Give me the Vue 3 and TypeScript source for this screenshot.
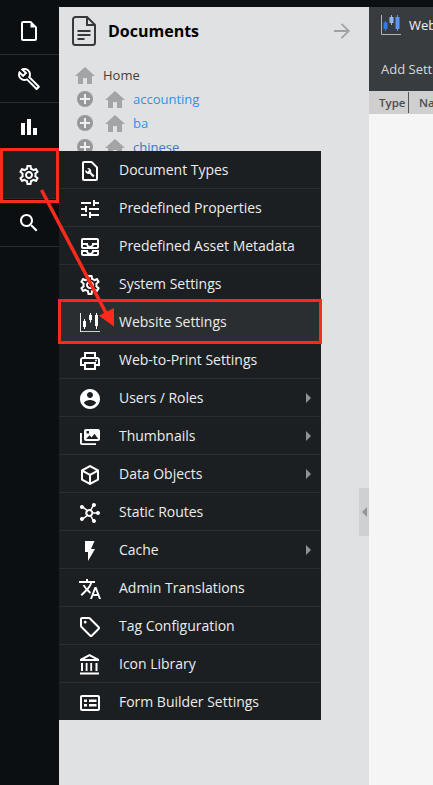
<script setup lang="ts">
interface MenuItem {
  label: string
  icon: string
  submenu?: boolean
  active?: boolean
  solid?: boolean
}

const gear =
  'M19.43 12.98c.04-.32.07-.64.07-.98 0-.34-.03-.66-.07-.98l2.11-1.65c.19-.15.24-.42.12-.64l-2-3.46c-.09-.16-.26-.25-.44-.25-.06 0-.12.01-.17.03l-2.49 1c-.52-.4-1.08-.73-1.69-.98l-.38-2.65C14.46 2.18 14.25 2 14 2h-4c-.25 0-.46.18-.49.42l-.38 2.65c-.61.25-1.17.59-1.69.98l-2.49-1c-.06-.02-.12-.03-.18-.03-.17 0-.34.09-.43.25l-2 3.46c-.13.22-.07.49.12.64l2.11 1.65c-.04.32-.07.65-.07.98 0 .33.03.66.07.98l-2.11 1.65c-.19.15-.24.42-.12.64l2 3.46c.09.16.26.25.44.25.06 0 .12-.01.17-.03l2.49-1c.52.4 1.08.73 1.69.98l.38 2.65c.03.24.24.42.49.42h4c.25 0 .46-.18.49-.42l.38-2.65c.61-.25 1.17-.59 1.69-.98l2.49 1c.06.02.12.03.18.03.17 0 .34-.09.43-.25l2-3.46c.12-.22.07-.49-.12-.64l-2.11-1.65zm-1.98-1.71c.04.31.05.52.05.73 0 .21-.02.43-.05.73l-.14 1.13.89.7 1.08.84-.7 1.21-1.27-.51-1.04-.42-.9.68c-.43.32-.84.56-1.25.73l-1.06.43-.16 1.13-.2 1.35h-1.4l-.19-1.35-.16-1.13-1.06-.43c-.43-.18-.83-.41-1.23-.71l-.91-.7-1.06.43-1.27.51-.7-1.21 1.08-.84.89-.7-.14-1.13c-.03-.31-.05-.54-.05-.74s.02-.43.05-.73l.14-1.13-.89-.7-1.08-.84.7-1.21 1.27.51 1.04.42.9-.68c.43-.32.84-.56 1.25-.73l1.06-.43.16-1.13.2-1.35h1.39l.19 1.35.16 1.13 1.06.43c.43.18.83.41 1.23.71l.91.7 1.06-.43 1.27-.51.7 1.21-1.07.85-.89.7.14 1.13zM12 8c-2.21 0-4 1.79-4 4s1.79 4 4 4 4-1.79 4-4-1.79-4-4-4zm0 6c-1.1 0-2-.9-2-2s.9-2 2-2 2 .9 2 2-.9 2-2 2z'

const nav: { name: string; icon: string; active?: boolean }[] = [
  { name: 'file', icon: 'M14 2H6c-1.1 0-2 .9-2 2v16c0 1.1.9 2 2 2h12c1.1 0 2-.9 2-2V8zM6 20V4h7.500v4.500H18V20z' },
  {
    name: 'tools',
    icon: 'M22.61 18.99l-9.08-9.08c.93-2.34.45-5.1-1.44-7C9.79.61 6.21.4 3.66 2.26L7.5 6.11 6.08 7.52 2.25 3.69C.39 6.23.6 9.82 2.9 12.11c1.86 1.86 4.57 2.35 6.89 1.48l9.11 9.11c.39.39 1.02.39 1.41 0l2.3-2.3c.4-.38.4-1.01 0-1.41zm-3 1.6l-9.46-9.46c-.61.45-1.29.72-2 .82-1.36.2-2.79-.21-3.83-1.25C3.37 9.76 2.93 8.5 3 7.26l3.09 3.09 4.24-4.24-3.09-3.09c1.24-.07 2.49.37 3.44 1.31 1.08 1.08 1.49 2.57 1.24 3.96-.12.71-.42 1.37-.88 1.96l9.45 9.45-.88.89z',
  },
  { name: 'reports', icon: 'M4 8h4v12H4zM10 4h4v16h-4zM16 13h4v7h-4z' },
  { name: 'settings', icon: gear, active: true },
  {
    name: 'search',
    icon: 'M15.5 14h-.79l-.28-.27C15.41 12.59 16 11.11 16 9.5 16 5.91 13.09 3 9.5 3S3 5.91 3 9.5 5.91 16 9.5 16c1.61 0 3.09-.59 4.23-1.57l.27.28v.79l5 4.99L20.49 19l-4.99-5zm-6 0C7.01 14 5 11.99 5 9.5S7.01 5 9.5 5 14 7.01 14 9.5 11.99 14 9.5 14z',
  },
]

const menu: MenuItem[] = [
  {
    label: 'Document Types',
    icon: 'M14 2H6c-1.1 0-2 .9-2 2v16c0 1.1.9 2 2 2h12c1.1 0 2-.9 2-2V8zM6 20V4h7.200L18 8.800V20zM16.600 16.700l-3.500-3.500c.4-1.200.1-2.400-.8-3.300-.9-.8-2-1-3-.7l1.900 1.900-1.700 1.700-2-1.900c-.4 1.100-.1 2.300.7 3.100.9.9 2.200 1.200 3.300.8l3.500 3.400z',
  },
  {
    label: 'Predefined Properties',
    icon: 'M3 17v2h6v-2H3zM3 5v2h10V5H3zm10 16v-2h8v-2h-8v-2h-2v6h2zM7 9v2H3v2h4v2h2V9H7zm14 4v-2H11v2h10zm-6-4h2V7h4V5h-4V3h-2v6z',
  },
  {
    label: 'Predefined Asset Metadata',
    icon: 'M19 3H5c-1.1 0-2 .9-2 2v7c0 1.1.9 2 2 2h14c1.1 0 2-.9 2-2V5c0-1.1-.9-2-2-2zM5 10h3.13c.21.78.67 1.47 1.27 2H5v-2zm14 2h-4.4c.6-.53 1.06-1.22 1.27-2H19v2zm0-4h-5v1c0 1.07-.93 2-2 2s-2-.93-2-2V8H5V5h14v3zm-5 7v1c0 .47-.19.9-.48 1.25-.37.45-.92.75-1.52.75s-1.15-.3-1.52-.75c-.29-.35-.48-.78-.48-1.25v-1H3v4c0 1.1.9 2 2 2h14c1.1 0 2-.9 2-2v-4h-7zm-9 2h3.13c.02.09.06.17.09.25.24.68.65 1.28 1.18 1.75H5v-2zm14 2h-4.4c.54-.47.95-1.07 1.18-1.75.03-.08.07-.17.09-.25H19v2z',
  },
  { label: 'System Settings', icon: gear },
  {
    label: 'Website Settings',
    icon: 'M2 2h.9v18.200H22v.9H2zM6 8h1v2h1v6H7v2H6v-2H5v-6h1zM12 2h1v2h1v5h-1v2.500h-1V9h-1V4h1zM18 2h1v2h1v11h-1v3h-1v-3h-1V4h1z',
    active: true,
  },
  {
    label: 'Web-to-Print Settings',
    icon: 'M19 8h-1V3H6v5H5c-1.66 0-3 1.34-3 3v6h4v4h12v-4h4v-6c0-1.66-1.34-3-3-3zM8 5h8v3H8V5zm8 12v2H8v-4h8v2zm2-2v-2H6v2H4v-4c0-.55.45-1 1-1h14c.55 0 1 .45 1 1v4h-2zM17 11.500a1 1 0 1 0 2 0a1 1 0 1 0-2 0z',
  },
  {
    label: 'Users / Roles',
    icon: 'M12 2C6.48 2 2 6.48 2 12s4.48 10 10 10 10-4.48 10-10S17.52 2 12 2zm0 3c1.66 0 3 1.34 3 3s-1.34 3-3 3-3-1.34-3-3 1.34-3 3-3zm0 14.2c-2.5 0-4.71-1.28-6-3.22.03-1.99 4-3.08 6-3.08 1.99 0 5.97 1.09 6 3.08-1.29 1.94-3.5 3.22-6 3.22z',
    submenu: true,
  },
  {
    label: 'Thumbnails',
    icon: 'M8 4h12c1.100 0 2 .9 2 2v8c0 1.100-.9 2-2 2H8c-1.100 0-2-.9-2-2V6c0-1.100.9-2 2-2zM8 14h12.200L16.500 8.700l-3 3.800-2-2.200zM8.500 6v2.500H11V6zM2 8h1.900v10.200H18V20H4c-1.100 0-2-.9-2-2z',
    submenu: true,
  },
  {
    label: 'Data Objects',
    icon: 'M21 16.500c0 .38-.21.71-.53.88l-7.900 4.440c-.16.12-.36.18-.57.18s-.41-.06-.57-.18l-7.900-4.440A1 1 0 0 1 3 16.500v-9c0-.38.21-.71.53-.88l7.900-4.440c.16-.12.36-.18.57-.18s.41.06.57.18l7.900 4.440c.32.17.53.5.53.88zM12 4.150L6.040 7.500 12 10.850l5.960-3.350zM5 15.910l6 3.380v-6.710L5 9.210zM19 15.910v-6.700l-6 3.370v6.710z',
    submenu: true,
  },
  {
    label: 'Static Routes',
    icon: 'M11.300 8a4 4 0 1 1-.1 0zM11.300 10a2 2 0 1 0 .1 0zM16 2a2 2 0 1 1-.1 0zM4 4a2 2 0 1 1-.1 0zM4 16a2 2 0 1 1-.1 0zM16 18a2 2 0 1 1-.1 0zM20 10a2 2 0 1 1-.1 0zM4.500 6.700l.9-1.200 4 3.300-.9 1.200zM4.500 17.300l4-3.300.9 1.200-4 3.300zM12.200 8.500l2.500-4.500 1.300.7-2.500 4.500zM12.200 15.500l1.300-.7 2.500 4.500-1.300.7zM14.500 11.300h5v1.400h-5z',
    solid: true,
  },
  { label: 'Cache', icon: 'M7 2h9.500l-3.500 8h4l-7 12v-9H7z', submenu: true },
  {
    label: 'Admin Translations',
    icon: 'M12.87 15.07l-2.54-2.51.03-.03c1.74-1.94 2.98-4.17 3.71-6.53H17V4h-7V2H8v2H1v1.99h11.17C11.5 7.92 10.44 9.75 9 11.35 8.07 10.32 7.3 9.19 6.69 8h-2c.73 1.63 1.73 3.17 2.98 4.56l-5.09 5.02L4 19l5-5 3.11 3.11.76-2.04zM18.5 10h-2L12 22h2l1.12-3h4.75L21 22h2l-4.5-12zm-2.62 7l1.62-4.33L19.12 17h-3.24z',
  },
  {
    label: 'Tag Configuration',
    icon: 'M21.41 11.58l-9-9C12.050 2.220 11.550 2 11 2H4c-1.100 0-2 .9-2 2v7c0 .55.22 1.050.59 1.420l9 9c.36.36.86.58 1.410.58s1.050-.22 1.410-.59l7-7c.37-.36.59-.86.59-1.410s-.23-1.060-.59-1.420zM13 20.010L4 11V4h7l9 9zM5.800 7.200a1.400 1.400 0 1 0 2.800 0a1.400 1.400 0 1 0-2.800 0z',
  },
  {
    label: 'Icon Library',
    icon: 'M11.500 1L2 6v2h19V6zM11.500 3.300L16.600 6H6.400zM3 10h2v8H3zM7.700 10h1.800v8H7.700zM12.300 10h1.800v8h-1.800zM17.500 10h2v8h-2zM2 19.500h19v2H2z',
  },
  {
    label: 'Form Builder Settings',
    icon: 'M4 4h16c1.100 0 2 .9 2 2v12c0 1.100-.9 2-2 2H4c-1.100 0-2-.9-2-2V6c0-1.100.9-2 2-2zM4 6v12h16V6zM6 8.500h3v2.500H6zM11 8.500h7.500v2.500H11zM6 13h3v2.500H6zM11 13h7.500v2.500H11z',
  },
]

const sites: string[] = ['accounting', 'ba', 'chinese']
const homePath = 'M10 1L0 10h3v8h5v-6h4v6h5v-8h3z'
</script>

<template>
  <div class="app">
    <nav class="rail">
      <div v-for="n in nav" :key="n.name" class="rail-item" :class="{ active: n.active }">
        <svg class="icon" viewBox="0 0 24 24"><path :d="n.icon" /></svg>
      </div>
    </nav>

    <section class="documents">
      <header class="doc-head">
        <svg class="doc-icon" viewBox="0 0 24 30">
          <path d="M3.500 1H15l8 8v17.500a2.500 2.500 0 0 1-2.500 2.500h-17A2.500 2.500 0 0 1 1 26.500v-23A2.500 2.500 0 0 1 3.500 1zM15 1v8h8M5.500 15h13M5.500 19h13M5.500 23h7" />
        </svg>
        <h1>Documents</h1>
        <svg class="arrow" viewBox="0 0 16 16"><path d="M0 8h15M7.500.8L14.800 8l-7.300 7.200" /></svg>
      </header>
      <div class="tree">
        <div class="row root">
          <svg class="home" viewBox="0 0 20 18"><path :d="homePath" /></svg>
          <span>Home</span>
        </div>
        <div v-for="s in sites" :key="s" class="row" :class="s">
          <svg class="plus" viewBox="0 0 16 16">
            <circle cx="8" cy="8" r="8" />
            <path d="M8 3v10M3 8h10" />
          </svg>
          <svg class="home" viewBox="0 0 20 18"><path :d="homePath" /></svg>
          <span>{{ s }}</span>
        </div>
      </div>
      <div class="collapse"><i></i></div>
    </section>

    <main class="content">
      <div class="tab">
        <svg class="tab-icon" viewBox="0 0 20 20">
          <path class="axis" d="M.5 0v19.500H20" />
          <path class="c1" d="M4 6h1v1.500h1.500v6.500H5v2H4v-2H2.500V7.500H4z" />
          <path class="c2" d="M10 0h1v2h1.500v6H11v2h-1V8H8.500V2H10z" />
          <path class="c3" d="M16 0h1v2h1.500v12H17v2h-1v-2h-1.500V2H16z" />
        </svg>
        <span>Website Settings</span>
      </div>
      <div class="toolbar">Add Setting</div>
      <div class="thead">
        <span class="th">Type</span>
        <span class="th">Name</span>
      </div>
    </main>

    <div class="menu">
      <div v-for="m in menu" :key="m.label" class="menu-item" :class="{ active: m.active }">
        <svg class="icon" :class="{ solid: m.solid }" viewBox="0 0 24 24"><path :d="m.icon" /></svg>
        <span class="label">{{ m.label }}</span>
        <i v-if="m.submenu" class="caret"></i>
      </div>
    </div>

    <div class="mark mark-rail"></div>
    <div class="mark mark-item"></div>
    <svg class="pointer" viewBox="0 0 433 785">
      <path class="shaft" d="M41.500 190L106.500 314" />
      <path class="tip" d="M114 326.500L99 315.800 114 308z" />
    </svg>
  </div>
</template>

<style>
body {
  margin: 0;
  background: #0b0e11;
}
</style>

<style scoped>
.app {
  position: relative;
  display: grid;
  grid-template-columns: 59px 310px 64px;
  box-sizing: border-box;
  width: 433px;
  height: 785px;
  padding-top: 7px;
  overflow: hidden;
  background: #0b0f12;
  font-family: "Open Sans", "Noto Sans", sans-serif;
}
svg {
  display: block;
  flex: none;
}
.rail-item {
  display: flex;
  align-items: center;
  box-sizing: border-box;
  height: 48px;
  padding-left: 17px;
  border-bottom: 1px solid #2a2d30;
}
.rail-item.active {
  background: #1d2124;
}
.icon {
  width: 24px;
  height: 24px;
  fill: #fff;
  fill-rule: evenodd;
}
.icon.solid {
  fill-rule: nonzero;
}
.documents {
  position: relative;
  background: #e0e1e3;
  overflow: hidden;
}
.doc-head {
  display: flex;
  align-items: center;
  height: 48px;
  padding: 0 19px 0 13px;
}
.doc-icon {
  width: 24px;
  height: 30px;
  fill: none;
  stroke: #393939;
  stroke-width: 2;
}
h1 {
  flex: 1;
  margin: 0 0 0 12px;
  font-size: 16px;
  line-height: 24px;
  color: #000;
}
.arrow {
  width: 16px;
  height: 16px;
  fill: none;
  stroke: #a0a1a2;
  stroke-width: 1.8;
}
.tree {
  padding: 8px 0 0 16px;
}
.row {
  display: flex;
  align-items: center;
  height: 24px;
  font-size: 13px;
  color: #2b94ea;
}
.row.root {
  color: #404040;
}
.row.chinese {
  color: #4276c2;
}
.home {
  width: 20px;
  height: 18px;
  margin-right: 8px;
  fill: #a3a4a5;
}
.plus {
  width: 16px;
  height: 16px;
  margin: 0 12px 0 2px;
  fill: #97989a;
}
.plus path {
  stroke: #eeeff0;
  stroke-width: 2;
}
.collapse {
  position: absolute;
  right: 0;
  top: 481px;
  display: flex;
  align-items: center;
  justify-content: center;
  width: 10px;
  height: 48px;
  background: #cfd0d2;
}
.collapse i {
  border: 5px solid transparent;
  border-left: 0;
  border-right-color: #929394;
}
.content {
  overflow: hidden;
  background: #f5f5f5;
  white-space: nowrap;
}
.tab {
  display: flex;
  align-items: center;
  height: 36px;
  padding-left: 12px;
  background: #393c3f;
  color: #f0f0f0;
  font-size: 13px;
}
.tab-icon {
  width: 20px;
  height: 20px;
  margin-right: 8px;
}
.axis {
  fill: none;
  stroke: #b0b3b6;
}
.c1 {
  fill: #3179ee;
}
.c2 {
  fill: #8db7f6;
}
.c3 {
  fill: #5795ef;
}
.toolbar {
  height: 48px;
  padding-left: 12px;
  background: #393c3f;
  color: #d8d9da;
  font-size: 13px;
  line-height: 52px;
}
.thead {
  display: flex;
  height: 23px;
  padding-left: 10px;
  background: #cfcfcf;
  color: #4c4c4c;
  font-size: 11.5px;
  font-weight: 600;
}
.th {
  flex: none;
  box-sizing: border-box;
  width: 30px;
  height: 21px;
  margin: 1px 10px 0 0;
  border-right: 1px solid #555;
  line-height: 22px;
}
.th:last-child {
  width: 60px;
  margin-right: 0;
}
.menu {
  position: absolute;
  left: 59px;
  top: 151px;
  width: 262px;
  height: 569px;
  overflow: hidden;
  background: #1c1f22;
}
.menu-item {
  display: flex;
  align-items: center;
  box-sizing: border-box;
  height: 38px;
  padding: 1px 10px 0 19px;
  border-bottom: 1px solid #2b2e31;
}
.menu-item.active {
  background: #2b2e31;
}
.menu-item .icon {
  margin-top: 2px;
}
.label {
  flex: 1;
  margin-left: 17px;
  color: #ececec;
  font-size: 14px;
  letter-spacing: -0.02px;
  line-height: 20px;
  white-space: nowrap;
}
.caret {
  border: 5px solid transparent;
  border-right: 0;
  border-left-color: #929292;
}
.mark {
  position: absolute;
  box-sizing: border-box;
  border: 3px solid #fb2a1c;
}
.mark-rail {
  left: 0;
  top: 148px;
  width: 59px;
  height: 55px;
}
.mark-item {
  left: 58px;
  top: 299px;
  width: 264px;
  height: 45px;
}
.pointer {
  position: absolute;
  left: 0;
  top: 0;
  width: 433px;
  height: 785px;
}
.shaft {
  stroke: #fb2a1c;
  stroke-width: 3.500;
}
.tip {
  fill: #fb2a1c;
}
</style>
